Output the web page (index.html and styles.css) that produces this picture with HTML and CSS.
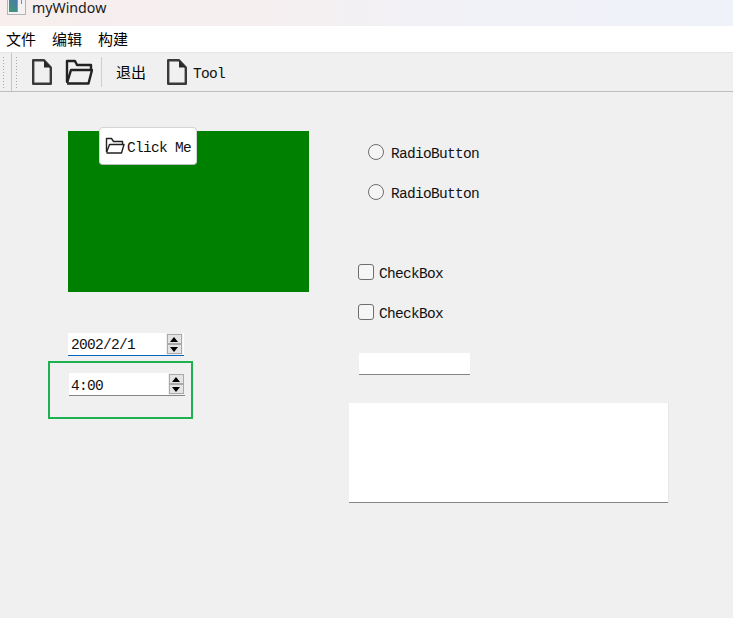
FILE: index.html
```html
<!DOCTYPE html>
<html lang="zh">
<head>
<meta charset="utf-8">
<title>myWindow</title>
<link rel="stylesheet" href="styles.css">
</head>
<body>
<div class="window">
  <header class="titlebar">
    <svg class="app-icon" width="19" height="15" viewBox="0 0 19 15">
      <defs>
        <linearGradient id="appfill" x1="0" y1="1" x2="1" y2="0">
          <stop offset="0" stop-color="#3f9a6e"/>
          <stop offset="1" stop-color="#4a78b0"/>
        </linearGradient>
      </defs>
      <rect x="0.5" y="-2" width="18" height="16.500" fill="#f2f2f3" stroke="#b4b4b8"/>
      <rect x="2" y="0" width="8" height="12" fill="url(#appfill)"/>
      <rect x="10" y="0" width="1" height="12" fill="#8a9aa0"/>
      <rect x="14" y="0" width="1" height="4" fill="#7f8f90"/>
    </svg>
    <span class="title">myWindow</span>
  </header>
  <nav class="menubar">
    <span class="menu-item">文件</span>
    <span class="menu-item">编辑</span>
    <span class="menu-item">构建</span>
  </nav>
  <div class="toolbar">
    <span class="grip grip-a"></span>
    <span class="toolbar-edge"></span>
    <span class="grip grip-b"></span>
    <button class="tool tool-new" type="button">
      <svg width="22" height="28" viewBox="0 0 22 28"><path d="M2.200 2.200H13L19.800 9.500V25.800H2.200z" fill="none" stroke="#3a3a3a" stroke-width="2.400" stroke-linejoin="round"/><path d="M13 2L20 9.500H13z" fill="#2a2a2a"/></svg>
    </button>
    <button class="tool tool-open" type="button">
      <svg width="28" height="28" viewBox="0 0 28 28"><path d="M2 24V3H10L12 7H26V12" fill="none" stroke="#222" stroke-width="2.400" stroke-linejoin="round"/><path d="M2 25L6 12H27L23.500 25.500H2" fill="none" stroke="#222" stroke-width="2.400" stroke-linejoin="round"/></svg>
    </button>
    <span class="toolbar-sep"></span>
    <span class="tool-text">退出</span>
    <button class="tool tool-doc" type="button">
      <svg width="22" height="28" viewBox="0 0 22 28"><path d="M2.200 2.200H13L19.800 9.500V25.800H2.200z" fill="none" stroke="#3a3a3a" stroke-width="2.400" stroke-linejoin="round"/><path d="M13 2L20 9.500H13z" fill="#2a2a2a"/></svg>
      <span class="mono tool-label">Tool</span>
    </button>
  </div>
  <main class="form">
    <section class="col-left">
      <div class="green-panel">
        <button class="click-me" type="button">
          <svg width="20" height="18" viewBox="0 0 20 18"><path d="M1.500 15V1.500H6.500L8.500 4.500H17.500V7.500" fill="none" stroke="#222" stroke-width="1.400" stroke-linejoin="round"/><path d="M1.500 15.500L4.500 7.500H19L16.500 16H1.500" fill="none" stroke="#222" stroke-width="1.400" stroke-linejoin="round"/></svg>
          <span class="mono click-label">Click Me</span>
        </button>
      </div>
      <div class="spin spin-date">
        <span class="mono spin-value">2002/2/1</span>
        <span class="spin-arrows"><i class="arrow up"></i><i class="arrow down"></i></span>
      </div>
      <div class="time-frame">
        <div class="spin spin-time">
          <span class="mono spin-value">4:00</span>
          <span class="spin-arrows"><i class="arrow up"></i><i class="arrow down"></i></span>
        </div>
      </div>
    </section>
    <section class="col-right">
      <label class="option radio-row"><span class="radio"></span><span class="mono option-label">RadioButton</span></label>
      <label class="option radio-row"><span class="radio"></span><span class="mono option-label">RadioButton</span></label>
      <label class="option check-row first"><span class="check"></span><span class="mono option-label">CheckBox</span></label>
      <label class="option check-row"><span class="check"></span><span class="mono option-label">CheckBox</span></label>
      <div class="line-edit"></div>
      <div class="text-edit"></div>
    </section>
  </main>
</div>
</body>
</html>
```
FILE: styles.css
```css
* { box-sizing: border-box; }
html, body { margin: 0; padding: 0; }
body { width: 733px; height: 618px; overflow: hidden; background: #f0f0f0; }
.window { display: flex; flex-direction: column; height: 618px; font-family: "Noto Sans", "Noto Sans CJK SC", sans-serif; color: #000; }
.mono { font-family: "Liberation Mono", "DejaVu Sans Mono", monospace; font-size: 14.5px; letter-spacing: -0.7px; color: #111; line-height: 16px; padding-top: 2px; }
.option-label { padding-top: 4px; }

.titlebar { height: 26px; display: flex; align-items: flex-start; padding-left: 7px; background: linear-gradient(90deg, #f7eeed 0%, #f5eff0 35%, #f0f2f8 70%, #f0f2f9 100%); }
.app-icon { display: block; }
.title { margin-left: 6px; font-size: 14.2px; line-height: 16px; color: #1a1a1a; }

.menubar { height: 26px; display: flex; align-items: center; gap: 16px; padding-left: 6px; background: #fff; }
.menu-item { font-family: "Noto Sans CJK SC", sans-serif; font-size: 15px; line-height: 20px; }

.toolbar { height: 40px; display: flex; align-items: center; background: #f0f0f0; border-top: 1px solid #e6e6e6; border-bottom: 1px solid #bdbdbd; }
.grip { width: 3px; height: 32px; background-image: radial-gradient(circle, #a9a9a9 0.8px, transparent 1px); background-size: 3px 3px; }
.grip-a { margin-left: 2px; }
.toolbar-edge { width: 1px; height: 38px; margin-left: 6px; background: #c6c6c6; }
.grip-b { margin-left: 3px; }
.tool { display: flex; align-items: center; padding: 0; border: 0; background: none; }
.tool-new { margin-left: 13px; }
.tool-open { margin-left: 12px; }
.toolbar-sep { width: 1px; height: 30px; margin-left: 8px; background: #cfcfcf; }
.tool-text { margin-left: 14px; font-family: "Noto Sans CJK SC", sans-serif; font-size: 15px; line-height: 20px; }
.tool-doc { margin-left: 20px; gap: 5px; }
.tool-label { padding-top: 4px; }

.form { flex: 1; display: flex; align-items: flex-start; }
.col-left { width: 349px; padding: 39px 0 0 68px; }
.green-panel { position: relative; width: 241px; height: 161px; background: #008000; }
.click-me { position: absolute; left: 31px; top: -4px; width: 98px; height: 38px; display: flex; align-items: center; gap: 2px; padding: 0 0 0 5px; background: #fff; border: 1px solid #d5d5d5; border-bottom-color: #bdbdbd; border-radius: 4px; }
.click-label { padding-top: 4px; }

.spin { width: 116px; height: 23px; display: flex; align-items: center; justify-content: space-between; padding: 0 2px 0 3px; }
.spin-date { margin-top: 41px; background: linear-gradient(#fff 0 22px, #0067c0 22px); }
.spin-time { margin: 10px 0 0 19px; padding: 0 1px 0 2px; background: linear-gradient(#fff 0 22px, #868686 22px); }
.spin-value { line-height: 20px; }
.spin-date .spin-value { padding-top: 0; }
.spin-arrows { display: flex; flex-direction: column; width: 15px; height: 20px; margin-top: -2px; box-shadow: 0 0 0 1px #f0f0f0; }
.arrow { display: block; height: 10px; background: #e4e4e4; border: 1px solid #a9a9a9; position: relative; }
.arrow::after { content: ""; position: absolute; left: 2px; border-left: 4.5px solid transparent; border-right: 4.5px solid transparent; }
.arrow.up::after { top: 2px; border-bottom: 5px solid #000; }
.arrow.down::after { top: 2px; border-top: 5px solid #000; }
.time-frame { width: 145px; height: 58px; margin: 5px 0 0 -20px; border: 2px solid #1db14f; }

.col-right { display: flex; flex-direction: column; padding-top: 51px; }
.option { display: flex; align-items: center; height: 18px; }
.radio-row { margin: 0 0 22px 19px; gap: 7px; }
.radio { width: 16px; height: 16px; border: 1px solid #6f6f6f; border-radius: 50%; background: #f4f4f4; }
.check-row { margin: 0 0 22px 9px; gap: 5px; }
.check-row.first { margin-top: 40px; }
.check { width: 16px; height: 16px; border: 1px solid #6e6e6e; border-radius: 3px; background: #f6f6f6; }
.line-edit { width: 111px; height: 22px; margin: 10px 0 0 10px; background: linear-gradient(#fff 0 21px, #858585 21px); }
.text-edit { width: 319px; height: 100px; margin-top: 28px; background: linear-gradient(#fff 0 99px, #858585 99px); box-shadow: 1px 0 0 #e6e6e6; }
```
